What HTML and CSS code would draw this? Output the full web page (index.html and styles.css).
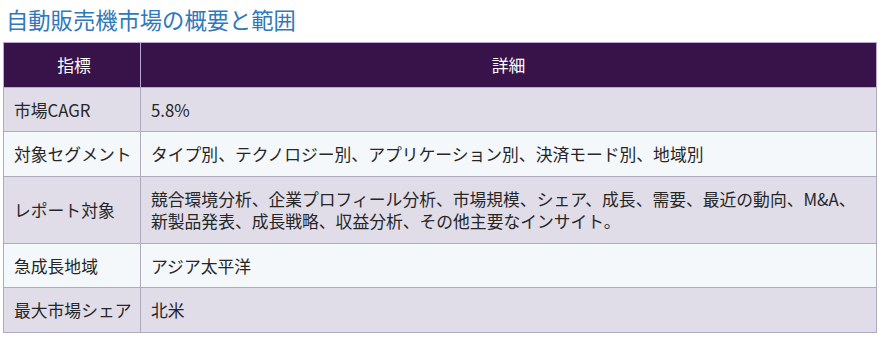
FILE: index.html
```html
<!DOCTYPE html>
<html lang="ja">
<head>
<meta charset="utf-8">
<link rel="stylesheet" href="styles.css">
</head>
<body>
<h2 class="title">自動販売機市場の概要と範囲</h2>
<table class="summary">
  <thead>
    <tr><th class="col-key">指標</th><th>詳細</th></tr>
  </thead>
  <tbody>
    <tr><td>市場CAGR</td><td>5.8%</td></tr>
    <tr><td>対象セグメント</td><td>タイプ別、テクノロジー別、アプリケーション別、決済モード別、地域別</td></tr>
    <tr><td>レポート対象</td><td>競合環境分析、企業プロフィール分析、市場規模、シェア、成長、需要、最近の動向、M&amp;A、<br>新製品発表、成長戦略、収益分析、その他主要なインサイト。</td></tr>
    <tr><td>急成長地域</td><td>アジア太平洋</td></tr>
    <tr><td>最大市場シェア</td><td>北米</td></tr>
  </tbody>
</table>
</body>
</html>
```
FILE: styles.css
```css
html, body {
  margin: 0;
  padding: 0;
  background: #ffffff;
}
body {
  padding: 4px 11px 0 3px;
  font-family: "Noto Sans CJK JP", "Noto Sans", sans-serif;
  color: #262626;
}
.title {
  margin: 0 0 8px 3px;
  font-size: 22.3px;
  line-height: 30px;
  font-weight: 400;
  color: #2f78b9;
}
.summary {
  width: 100%;
  border-collapse: collapse;
  font-size: 16.8px;
}
.summary th, .summary td {
  padding: 11px 10px 10.7px;
  line-height: 22px;
  text-align: left;
  vertical-align: middle;
  white-space: nowrap;
}
.summary th {
  background: #37134a;
  color: #ffffff;
  font-weight: 400;
  text-align: center;
  border: 1px solid #bba6d6;
}
.summary td {
  border: 1px solid #aeabc0;
}
.summary td:first-child {
  padding-right: 6px;
}
.summary .col-key {
  width: 120px;
  padding-right: 6px;
}
.summary tbody tr:nth-child(odd) td {
  background: #e0dde9;
}
.summary tbody tr:nth-child(even) td {
  background: #f4f8fb;
}
```
